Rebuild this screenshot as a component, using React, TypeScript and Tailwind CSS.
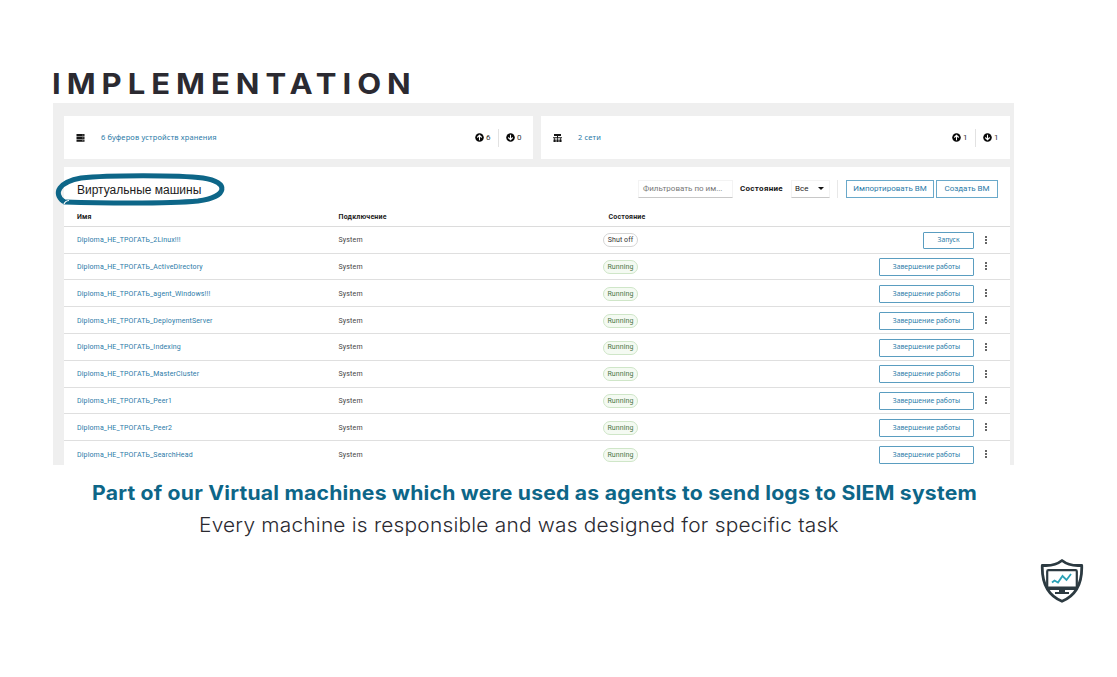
type Vm = { name: string; state: string; action: string };

const vms: Vm[] = [
  { name: "Diploma_НЕ_ТРОГАТЬ_2Linux!!!", state: "Shut off", action: "Запуск" },
  { name: "Diploma_НЕ_ТРОГАТЬ_ActiveDirectory", state: "Running", action: "Завершение работы" },
  { name: "Diploma_НЕ_ТРОГАТЬ_agent_Windows!!!", state: "Running", action: "Завершение работы" },
  { name: "Diploma_НЕ_ТРОГАТЬ_DeploymentServer", state: "Running", action: "Завершение работы" },
  { name: "Diploma_НЕ_ТРОГАТЬ_Indexing", state: "Running", action: "Завершение работы" },
  { name: "Diploma_НЕ_ТРОГАТЬ_MasterCluster", state: "Running", action: "Завершение работы" },
  { name: "Diploma_НЕ_ТРОГАТЬ_Peer1", state: "Running", action: "Завершение работы" },
  { name: "Diploma_НЕ_ТРОГАТЬ_Peer2", state: "Running", action: "Завершение работы" },
  { name: "Diploma_НЕ_ТРОГАТЬ_SearchHead", state: "Running", action: "Завершение работы" },
];

function CircleArrow({ down = false }: { down?: boolean }) {
  return (
    <svg viewBox="0 0 16 16" className={down ? "size-[9px] rotate-180" : "size-[9px]"}>
      <circle cx="8" cy="8" r="7.6" fill="#080808" />
      <path d="M8 13V4M4 8 8 4 12 8" fill="none" stroke="#fff" strokeWidth="1.9" />
    </svg>
  );
}

function Counts({ up, down }: { up: number; down: number }) {
  return (
    <div className="flex items-center text-[8px] text-[#333]">
      <CircleArrow />
      <span className="ml-[2px] w-[5px]">{up}</span>
      <span className="mx-[7px] h-[18px] w-px bg-[#e2e2e2]" />
      <CircleArrow down />
      <span className="ml-[2px] w-[5px]">{down}</span>
    </div>
  );
}

function StorageIcon() {
  return (
    <svg viewBox="0 0 18 16" className="h-[8px] w-[9px]">
      <path d="M1 0h16v4.4H1zM1 5.6h16V10H1zM1 11.2h16v4.4H1z" fill="#151515" />
      <path d="M12 2.2h3M12 7.8h3M12 13.4h3" stroke="#aaa" strokeWidth="1.2" />
    </svg>
  );
}

function NetworkIcon() {
  return (
    <svg viewBox="0 0 18 16" className="h-[8px] w-[9px]">
      <path d="M2 0h14v4H2zM8 4h2v3H8zM0 6.5h18v2H0zM1 11h4.5v5H1zM6.8 11h4.5v5H6.8zM12.6 11h4.5v5h-4.5zM2.5 8.5h1.4v3H2.5zM8.3 8.5h1.4v3H8.3zM14.1 8.5h1.4v3h-1.4z" fill="#151515" />
    </svg>
  );
}

function ShieldLogo() {
  return (
    <svg viewBox="0 0 44 46" className="h-[46px] w-[44px]" fill="none">
      <path d="M22 2.5C17 6.5 10 8 2.3 7.3C1.7 24 7 37 22 43.3C37 37 42.3 24 41.7 7.3C34 8 27 6.5 22 2.5Z" stroke="#2c3a41" strokeWidth="2.8" strokeLinejoin="round" />
      <rect x="7.2" y="12.2" width="29.6" height="18.6" rx="1.2" fill="#fff" stroke="#2c3a41" strokeWidth="2.2" />
      <path d="M8 28.5h28v2.5H8zM19 31h6v3h4v2H15v-2h4z" fill="#2c3a41" />
      <path d="M12 24.5 14.5 22.5l3.5 2 4.5-6.5 4 4 4.5-6" stroke="#2ba2b7" strokeWidth="1.8" />
    </svg>
  );
}

export default function App() {
  return (
    <main className="flex h-[677px] w-[1117px] flex-col overflow-hidden bg-white font-['Roboto','Noto_Sans',sans-serif]">
      <h1 className="ml-[51.5px] mt-[64px] h-[39px] w-max origin-left scale-x-[1.07] whitespace-nowrap font-['Inter',sans-serif] text-[29px] font-bold leading-[39px] tracking-[5.6px] text-[#2b2a31]">
        IMPLEMENTATION
      </h1>

      <section className="ml-[53px] flex h-[362px] w-[961px] shrink-0 flex-col overflow-hidden bg-[#efefef] pl-[11px] pr-[4px] pt-[13px]">
        <div className="flex shrink-0 gap-[8px]">
          <div className="flex h-[43px] w-[469px] items-center bg-white pl-[12px] pr-[11px]">
            <StorageIcon />
            <a className="ml-[16px] flex-1 whitespace-nowrap font-['Noto_Sans',sans-serif] text-[7.5px] tracking-[0.15px] text-[#2b7ba8]">6 буферов устройств хранения</a>
            <Counts up={6} down={0} />
          </div>
          <div className="flex h-[43px] flex-1 items-center bg-white pl-[12px] pr-[11px]">
            <NetworkIcon />
            <a className="ml-[16px] flex-1 whitespace-nowrap font-['Noto_Sans',sans-serif] text-[7.5px] tracking-[0.15px] text-[#2b7ba8]">2 сети</a>
            <Counts up={1} down={1} />
          </div>
        </div>

        <div className="mt-[8px] flex shrink-0 flex-col bg-white">
          <div className="flex h-[42px] items-center pl-[13px] pr-[12px] pt-[1px]">
            <div className="relative flex-1">
              <svg viewBox="0 0 172 36" className="absolute -left-[23px] -top-[6.5px] h-[36px] w-[172px]" fill="none">
                <path d="M9 28C-1 20 5 9 27 5C54 2 125 2 149 5C176 9 174 24 144 28C112 31 42 30 11 29" stroke="#0d6688" strokeWidth="5" strokeLinecap="round" />
                <path d="M10 31q1-3 5-3.5" stroke="#fff" strokeWidth="1.2" />
              </svg>
              <h2 className="relative top-px whitespace-nowrap font-['Liberation_Sans',sans-serif] text-[12px] leading-[18px] text-[#1b1b1b]">Виртуальные машины</h2>
            </div>
            <div className="flex h-[18px] w-[95px] items-center border border-b-[#c8c8c8] border-l-[#f3f3f3] border-r-[#f3f3f3] border-t-[#f3f3f3] pl-[4px] text-[8px] text-[#777]">
              <span className="whitespace-nowrap">Фильтровать по им...</span>
            </div>
            <span className="ml-[7px] w-[44px] whitespace-nowrap text-[8px] font-bold tracking-[0.3px] text-[#151515]">Состояние</span>
            <div className="ml-[7px] flex h-[18px] w-[39px] items-center justify-between border border-b-[#c8c8c8] border-l-[#f3f3f3] border-r-[#f3f3f3] border-t-[#f3f3f3] pl-[3px] pr-[5px] text-[8px] text-[#222]">
              Все
              <svg viewBox="0 0 6 3" className="h-[3px] w-[6px]"><path d="M0 0h6L3 3z" fill="#111" /></svg>
            </div>
            <span className="ml-[7px] h-[18px] w-px bg-[#e8e8e8]" />
            <button className="ml-[8px] h-[18px] w-[88px] whitespace-nowrap border border-[#6aa9ca] text-[8px] text-[#2b7ba8]">Импортировать ВМ</button>
            <button className="ml-[2px] h-[18px] w-[62px] whitespace-nowrap border border-[#6aa9ca] text-[8px] text-[#2b7ba8]">Создать ВМ</button>
          </div>

          <div className="grid h-[17.8px] grid-cols-[261.5px_270px_1fr] items-center border-b border-[#dcdcdc] pl-[13px] text-[7px] font-bold tracking-[0.2px] text-[#222]">
            <span>Имя</span>
            <span>Подключение</span>
            <span>Состояние</span>
          </div>

          {vms.map((vm) => (
            <div key={vm.name} className="grid h-[26.8px] grid-cols-[261.5px_264.5px_1fr_auto_36px] items-center border-b border-[#dfdfdf] pl-[13px] pt-[1.4px] text-[7px] text-[#444]">
              <a className="whitespace-nowrap tracking-[0.14px] text-[#2b7ba8]">{vm.name}</a>
              <span className="tracking-[0.16px]">System</span>
              <span
                className={
                  vm.state === "Running"
                    ? "flex h-[14px] w-[35px] items-center justify-center rounded-full border border-[#cfe6c8] bg-[#f4faf2] tracking-[0.1px] text-[#4b7646]"
                    : "flex h-[14px] w-[35px] items-center justify-center whitespace-nowrap rounded-full border border-[#d5d5d5] bg-white tracking-[0.1px] text-[#333]"
                }
              >
                {vm.state}
              </span>
              <button
                className={
                  vm.state === "Running"
                    ? "h-[18px] w-[95px] whitespace-nowrap rounded-[1px] border border-[#5a9dc0] font-['Noto_Sans',sans-serif] text-[6.8px] text-[#2b7ba8]"
                    : "h-[17px] w-[51px] whitespace-nowrap rounded-[1px] border border-[#5a9dc0] font-['Noto_Sans',sans-serif] text-[6.8px] text-[#2b7ba8]"
                }
              >
                {vm.action}
              </button>
              <svg viewBox="0 0 2 8" className="-mt-[1.5px] ml-[11px] h-[8px] w-[2px]">
                <path d="M0 0h2v2H0zM0 3h2v2H0zM0 6h2v2H0z" fill="#666" />
              </svg>
            </div>
          ))}
        </div>
      </section>

      <p className="ml-[91.5px] mt-[13px] h-[30px] w-max origin-left scale-x-[1.058] whitespace-nowrap font-['Inter',sans-serif] text-[20px] font-bold leading-[30px] tracking-[0.2px] text-[#0d6688]">
        Part of our Virtual machines which were used as agents to send logs to SIEM system
      </p>
      <p className="ml-[198.5px] mt-[2px] h-[30px] w-max origin-left scale-x-[1.044] whitespace-nowrap font-['Inter',sans-serif] text-[20px] font-light leading-[30px] tracking-[0.2px] text-[#2b2a31]">
        Every machine is responsible and was designed for specific task
      </p>

      <div className="ml-[1040px] mt-[18px]">
        <ShieldLogo />
      </div>
    </main>
  );
}
